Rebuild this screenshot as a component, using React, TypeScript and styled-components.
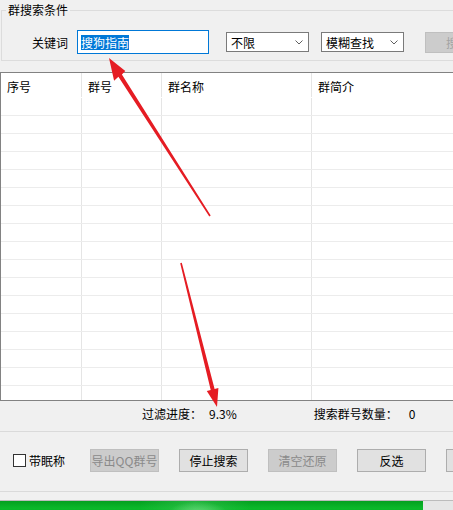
import styled, { createGlobalStyle } from 'styled-components'

const GlobalStyle = createGlobalStyle`
    html, body {
        margin: 0;
        padding: 0;
        background: #f0f0f0;
    }
    body {
        font-family: "Noto Sans CJK SC", "Microsoft YaHei", sans-serif;
        font-size: 12px;
        color: #000;
    }
`

const Window = styled.div`
    position: relative;
    width: 453px;
    height: 510px;
    overflow: hidden;
    background: #f0f0f0;
`

const GroupBox = styled.fieldset`
    margin: 0 -20px 0 1px;
    padding: 0 0 6px 0;
    min-width: 0;
    border: 1px solid #dcdcdc;
    border-right: none;
`

const Legend = styled.legend`
    margin-left: 4px;
    padding: 0 2px;
    line-height: 20px;
    font-size: 12px;
`

const SearchRow = styled.div`
    display: flex;
    align-items: center;
    height: 24px;
    margin-top: 10px;
    padding-left: 30px;

    & > * {
        flex-shrink: 0;
    }
`

const TextBox = styled.div`
    width: 132px;
    height: 24px;
    margin-left: 9px;
    box-sizing: border-box;
    border: 1px solid #0078d7;
    background: #fff;
    padding-left: 3px;
    display: flex;
    align-items: center;
`

const Selected = styled.span`
    background: #0078d7;
    color: #fff;
    line-height: 15px;
`

const ComboBox = styled.div<{ $gap: number }>`
    width: 83px;
    height: 20px;
    margin-left: ${(p) => p.$gap}px;
    box-sizing: border-box;
    border: 1px solid #7a7a7a;
    background: #fff;
    display: flex;
    align-items: center;
    justify-content: space-between;
    padding: 0 5px 0 4px;
`

const Button = styled.div<{ $disabled?: boolean; $width?: number }>`
    width: ${(p) => p.$width ?? 69}px;
    height: 23px;
    box-sizing: border-box;
    flex-shrink: 0;
    display: flex;
    align-items: center;
    justify-content: center;
    border: 1px solid ${(p) => (p.$disabled ? '#bfbfbf' : '#adadad')};
    background: ${(p) => (p.$disabled ? '#cccccc' : '#e1e1e1')};
    color: ${(p) => (p.$disabled ? '#8a8a8a' : '#000')};
    white-space: nowrap;
`

const SearchButton = styled(Button)`
    margin-left: 21px;
    height: 21px;
    justify-content: flex-start;
    padding-left: 20px;
    color: #a3a3a3;
`

const Table = styled.div`
    margin: 11px -20px 0 0;
    height: 329px;
    box-sizing: border-box;
    border: 1px solid #828282;
    border-right: none;
    background: #fff;
    overflow: hidden;
`

const GridRow = styled.div<{ $header?: boolean }>`
    display: grid;
    grid-template-columns: 81px 80px 150px 1fr;
    height: ${(p) => (p.$header ? 25 : 18)}px;
    box-sizing: border-box;
    border-bottom: 1px solid ${(p) => (p.$header ? 'transparent' : '#ececec')};
`

const Cell = styled.div<{ $header?: boolean }>`
    border-right: 1px solid #e5e5e5;
    padding: ${(p) => (p.$header ? '6px 0 0 6px' : '0')};
    line-height: 16px;
`

const StatusRow = styled.div`
    display: flex;
    height: 30px;
    padding: 5px 0 0 142px;
    box-sizing: border-box;
    line-height: 16px;
    white-space: nowrap;
`

const Value = styled.span<{ $gap: number }>`
    margin-left: ${(p) => p.$gap}px;
`

const ActionPanel = styled.div`
    height: 61px;
    box-sizing: border-box;
    border-top: 1px solid #dadada;
    border-bottom: 1px solid #dadada;
    padding-top: 17px;
`

const ActionRow = styled.div`
    display: flex;
    align-items: center;
    height: 23px;
    padding-left: 13px;
    gap: 20px;
    white-space: nowrap;

    & > * {
        flex-shrink: 0;
    }
`

const CheckLabel = styled.label`
    display: flex;
    align-items: center;
    gap: 3px;
    margin-right: 5px;
`

const CheckBox = styled.span`
    width: 13px;
    height: 13px;
    box-sizing: border-box;
    border: 1px solid #333;
    background: #fff;
`

const Progress = styled.div`
    margin: 8px -20px 0 0;
    height: 20px;
    box-sizing: border-box;
    border: 1px solid #bcbcbc;
    border-left: none;
    background: #e6e6e6;
`

const ProgressFill = styled.div`
    height: 100%;
    background:
        radial-gradient(ellipse 30px 12px at 198px 70%, rgba(130, 225, 145, 0.7), rgba(130, 225, 145, 0) 100%),
        linear-gradient(to right, rgba(70, 200, 95, 0) 140px, rgba(70, 200, 95, 0.5) 195px, rgba(70, 200, 95, 0) 250px),
        linear-gradient(#04a020, #0bb82a 40%, #06b025);
`

const Arrows = styled.svg`
    position: absolute;
    inset: 0;
    pointer-events: none;
`

const Chevron = () => (
    <svg width="8" height="5" viewBox="0 0 8 5">
        <path d="M0.5 0.5 L4 4 L7.5 0.5" fill="none" stroke="#606060" strokeWidth="1" />
    </svg>
)

const headers = ['序号', '群号', '群名称', '群简介']

export default function App() {
    return (
        <>
            <GlobalStyle />
            <Window>
                <GroupBox>
                    <Legend>群搜索条件</Legend>
                    <SearchRow>
                        <span>关键词</span>
                        <TextBox>
                            <Selected>搜狗指南</Selected>
                        </TextBox>
                        <ComboBox $gap={17}>
                            <span>不限</span>
                            <Chevron />
                        </ComboBox>
                        <ComboBox $gap={12}>
                            <span>模糊查找</span>
                            <Chevron />
                        </ComboBox>
                        <SearchButton $disabled $width={64}>
                            搜索
                        </SearchButton>
                    </SearchRow>
                </GroupBox>

                <Table>
                    <GridRow $header>
                        {headers.map((h) => (
                            <Cell $header key={h}>
                                {h}
                            </Cell>
                        ))}
                    </GridRow>
                    {Array.from({ length: 17 }, (_, i) => (
                        <GridRow key={i}>
                            <Cell />
                            <Cell />
                            <Cell />
                            <Cell />
                        </GridRow>
                    ))}
                </Table>

                <StatusRow>
                    <span>过滤进度：</span>
                    <Value $gap={7}>9.3%</Value>
                    <Value $gap={77}>搜索群号数量：</Value>
                    <Value $gap={11}>0</Value>
                </StatusRow>

                <ActionPanel>
                    <ActionRow>
                        <CheckLabel>
                            <CheckBox />
                            带眠称
                        </CheckLabel>
                        <Button $disabled>导出QQ群号</Button>
                        <Button>停止搜索</Button>
                        <Button $disabled>清空还原</Button>
                        <Button>反选</Button>
                        <Button />
                    </ActionRow>
                </ActionPanel>

                <Progress>
                    <ProgressFill style={{ width: 423 }} />
                </Progress>

                <Arrows width="453" height="510" viewBox="0 0 453 510">
                    <polygon
                        fill="#e51c23"
                        points="109,58 125.3,71.1 121.9,74.6 210.7,215.6 209.3,216.4 118.4,76.8 114.1,80.8"
                    />
                    <polygon
                        fill="#e51c23"
                        points="217,407 218.4,388.1 214.6,389.0 181.8,262.8 180.2,263.2 210.7,390.0 206.8,391.0"
                    />
                </Arrows>
            </Window>
        </>
    )
}
